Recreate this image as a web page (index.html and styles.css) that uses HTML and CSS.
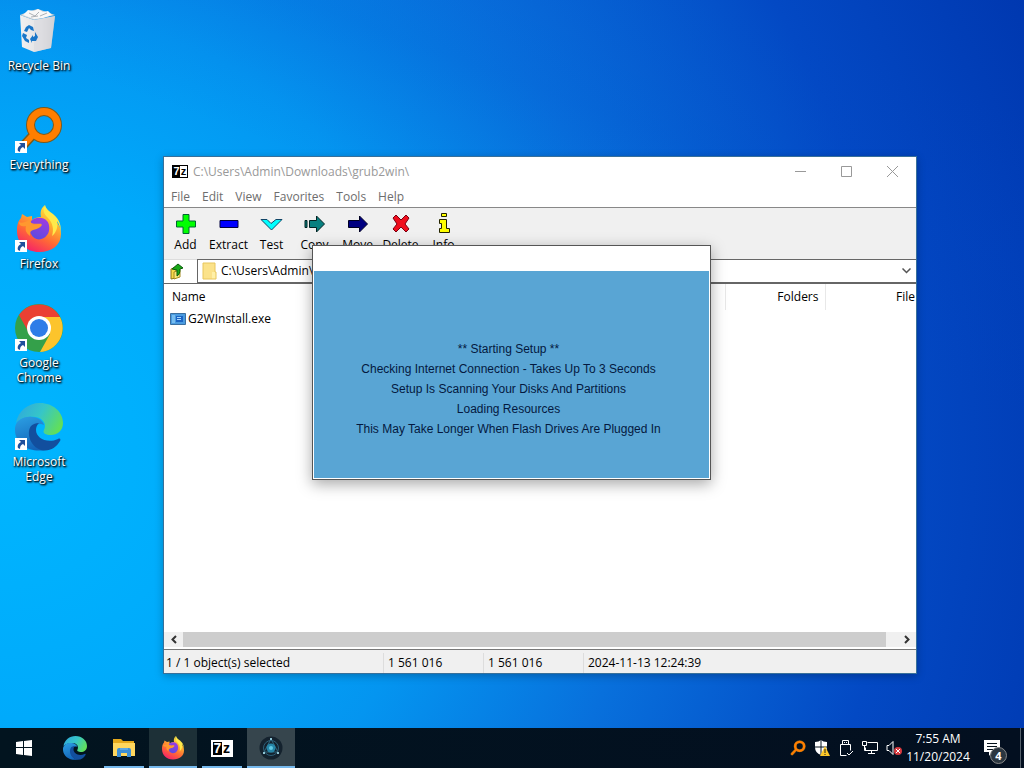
FILE: index.html
```html
<!DOCTYPE html>
<html lang="en">

<head>
     <meta charset="UTF-8">
     <meta name="viewport" content="width=device-width, initial-scale=1.0">
     <title>Desktop</title>
     <link rel="stylesheet" href="styles.css">
</head>

<body>
     <!-- shared icons -->
     <svg class="sprite" width="0" height="0" aria-hidden="true">
          <defs>
               <linearGradient id="ffBody" x1="0.8" y1="0" x2="0.3" y2="1">
                    <stop offset="0" stop-color="#fff04a" />
                    <stop offset="0.35" stop-color="#ffb02e" />
                    <stop offset="0.65" stop-color="#ff6a35" />
                    <stop offset="1" stop-color="#f5206a" />
               </linearGradient>
               <linearGradient id="ffGlobe" x1="0.7" y1="0" x2="0.3" y2="1">
                    <stop offset="0" stop-color="#a03be0" />
                    <stop offset="1" stop-color="#5b4be0" />
               </linearGradient>
               <linearGradient id="edgeTop" x1="0" y1="0.2" x2="1" y2="0.6">
                    <stop offset="0" stop-color="#2fa9dc" />
                    <stop offset="0.5" stop-color="#36c6c8" />
                    <stop offset="1" stop-color="#62df58" />
               </linearGradient>
               <linearGradient id="edgeLeft" x1="0.3" y1="0" x2="0.6" y2="1">
                    <stop offset="0" stop-color="#2a9be0" />
                    <stop offset="1" stop-color="#1263b8" />
               </linearGradient>
               <linearGradient id="binSide" x1="0" y1="0" x2="1" y2="0">
                    <stop offset="0" stop-color="#f1f1f1" />
                    <stop offset="0.6" stop-color="#e2e2e4" />
                    <stop offset="1" stop-color="#b9bbc0" />
               </linearGradient>
          </defs>
          <symbol id="shortcut" viewBox="0 0 12 12">
               <path d="M0 0h12v12H0z" fill="#fff" />
               <path d="M4 2h6v6L8 6C6 7 5 8 5 11L3 10C2 7 4 5 6 4z" fill="#1f4f9c" />
          </symbol>
          <symbol id="everything" viewBox="0 0 48 48">
               <path d="M18 29L6 42" stroke="#7a5a1c" stroke-width="9" stroke-linecap="round" />
               <circle cx="29" cy="19" r="13.500" fill="none" stroke="#7a5a1c" stroke-width="9" />
               <path d="M18 29L6 42" stroke="#ff7e00" stroke-width="6" stroke-linecap="round" />
               <circle cx="29" cy="19" r="13.500" fill="none" stroke="#ff7e00" stroke-width="7" />
          </symbol>
          <symbol id="firefox" viewBox="0 0 48 48">
               <path d="M30 0c-2 5-1 8 3 11 8 4 13 9 13 18 0 11-9 18-22 18S2 38 2 26c0-6 1-10 4-13l1-4 5 3 5-1 0 4c4-3 7-3 9-3-1-5 0-9 4-12z" fill="url(#ffBody)" />
               <path d="M30 0c-3 5-1 9 3 13 5 5 6 12 4 18 5-4 6-10 5-15 3 4 4 9 3 14 2-9 0-15-7-21-4-3-7-5-8-9z" fill="#ffe94a" />
               <path d="M15 17c4-5 13-6 17-1 3 3 3 11 0 14-4 6-13 6-16-1-2-3-1-6 2-6 4 0 7-1 9-4-4-1-8 1-12-2z" fill="url(#ffGlobe)" />
               <path d="M4 17c4 2 8-1 12-3-1 3 0 5 3 6l8 0c-2 3-5 4-9 5-3 1-3 3-3 6-4-3-5-6-4-10-4 1-7 0-7-4z" fill="#ff982f" />
          </symbol>
          <symbol id="chrome" viewBox="0 0 48 48">
               <circle cx="24" cy="24" r="24" fill="#34a04a" />
               <path d="M4 11A24 24 0 0 1 45 13H24L14 29z" fill="#ea4033" />
               <path d="M24 13h21A24 24 0 0 1 25 48L35 30z" fill="#fcc42c" />
               <circle cx="24" cy="24" r="12" fill="#fff" />
               <circle cx="24" cy="24" r="9" fill="#2e7de8" />
          </symbol>
          <symbol id="edge" viewBox="0 0 48 48">
               <path d="M1 20C3 8 13 0 25 0c13 0 23 9 23 20 0 8-6 12-12 12-5 0-9-2-7-5 3-6-1-12-9-13C12 13 4 16 1 20z" fill="url(#edgeTop)" />
               <path d="M0 25c1-8 9-12 17-11 6 0 11 4 12 8-6-3-13 2-13 9 0 9 6 15 14 16C14 50-1 41 0 25z" fill="url(#edgeLeft)" />
               <path d="M16 23c-5 7-1 20 10 24 8 2 15-2 19-9 1-2 0-3-2-2-11 5-22-1-22-9 0-3 1-5 3-7-3 0-6 1-8 3z" fill="#124f9e" />
          </symbol>
     </svg>

     <main class="desktop">
          <nav class="icons" aria-label="Desktop icons">
               <a class="shortcut-item" href="#">
                    <svg class="app-icon" viewBox="0 0 48 48">
                         <path d="M5 8l14 5 21-4-4 32-17 4-12-5z" fill="url(#binSide)" />
                         <path d="M5 8l10-4 8-2 17 6-21 5z" fill="#cfd2d5" />
                         <path d="M8 8l5-5 6 1 4-2 5 3 5-1 4 4-9 3-9 1z" fill="#f8f8f8" />
                         <path d="M14 6l6 3 4-4M25 9l7-3M16 10l7-1" stroke="#adb1b6" fill="none" />
                         <path d="M19 13l21-4-4 32-17 4z" fill="#dcdcdf" opacity=".7" />
                         <path d="M11 20l3-2 4 2 1 4-3-1-2-2-2 4-3-1zM8 26l4 2-1 3 3 2v3l-4-2-3-5zM20 25l3 5-2 4h-4v2l-2-4 3-4v2l2-1z" fill="#1976c8" />
                    </svg>
                    <span>Recycle Bin</span>
               </a>
               <a class="shortcut-item" href="#">
                    <svg class="app-icon" viewBox="0 0 48 48">
                         <use href="#everything" />
                         <use href="#shortcut" x="0" y="35" width="12" height="12" />
                    </svg>
                    <span>Everything</span>
               </a>
               <a class="shortcut-item" href="#">
                    <svg class="app-icon" viewBox="0 0 48 48">
                         <use href="#firefox" />
                         <use href="#shortcut" x="0" y="35" width="12" height="12" />
                    </svg>
                    <span>Firefox</span>
               </a>
               <a class="shortcut-item" href="#">
                    <svg class="app-icon" viewBox="0 0 48 48">
                         <use href="#chrome" />
                         <use href="#shortcut" x="0" y="35" width="12" height="12" />
                    </svg>
                    <span>Google<br>Chrome</span>
               </a>
               <a class="shortcut-item" href="#">
                    <svg class="app-icon" viewBox="0 0 48 48">
                         <use href="#edge" />
                         <use href="#shortcut" x="0" y="35" width="12" height="12" />
                    </svg>
                    <span>Microsoft<br>Edge</span>
               </a>
          </nav>

          <!-- file manager -->
          <section class="window">
               <header class="titlebar">
                    <span class="zip-logo small"><b>7</b><b>z</b></span>
                    <h1>C:\Users\Admin\Downloads\grub2win\</h1>
                    <button class="win-btn" aria-label="Minimize"><svg width="11" height="11"><path d="M0 5.500h11" /></svg></button>
                    <button class="win-btn" aria-label="Maximize"><svg width="11" height="11"><path d="M.5.500h10v10H.5z" /></svg></button>
                    <button class="win-btn" aria-label="Close"><svg width="11" height="11"><path d="M0 0l11 11M11 0L0 11" /></svg></button>
               </header>
               <div class="menubar">
                    <button>File</button>
                    <button>Edit</button>
                    <button>View</button>
                    <button>Favorites</button>
                    <button>Tools</button>
                    <button>Help</button>
               </div>
               <div class="toolbar">
                    <button>
                         <svg width="24" height="24"><path d="M9 2.500h6v6.500h6.500v6h-6.500v6.500H9v-6.500H2.500V9H9z" fill="#0f0" stroke="#063" /></svg>
                         <span>Add</span>
                    </button>
                    <button>
                         <svg width="24" height="24"><path d="M3 8.500h18v7H3z" fill="#00f" stroke="#000040" /></svg>
                         <span>Extract</span>
                    </button>
                    <button>
                         <svg width="24" height="24"><path d="M1 7.500h6l4 4 5-4h6L11.500 18z" fill="#0ff" stroke="#146" /></svg>
                         <span>Test</span>
                    </button>
                    <button>
                         <svg width="24" height="24"><path d="M2 8.500h2v7H2zM6.500 8.500h7V4l8 8-8 8v-4.500h-7z" fill="#088080" stroke="#022" /></svg>
                         <span>Copy</span>
                    </button>
                    <button>
                         <svg width="24" height="24"><path d="M2.500 8.500h11V4l8 8-8 8v-4.500h-11z" fill="#000080" stroke="#002" /></svg>
                         <span>Move</span>
                    </button>
                    <button>
                         <svg width="24" height="24"><path d="M4 6l3-3 5 5 5-5 3 3-4 6 4 5-3 3-5-5-5 5-3-3 4-5z" fill="#f00d1c" stroke="#701" /></svg>
                         <span>Delete</span>
                    </button>
                    <button>
                         <svg width="24" height="24"><path d="M9.500 1.500h5v3h-5zM7.500 7.500h7v9h3v4h-10v-4h2v-5h-2z" fill="#ff0" stroke="#220" /></svg>
                         <span>Info</span>
                    </button>
               </div>
               <div class="addressbar">
                    <button class="up" aria-label="Up one level">
                         <svg width="16" height="18" viewBox="0 0 16 18">
                              <path d="M2 6l5-2v11l-5 1z" fill="#f6d94a" stroke="#8a7418" />
                              <path d="M5 16l6-2V7L5 9z" fill="#fbe77a" stroke="#a38a20" />
                              <path d="M3 6l6-5 5 4-3 1c0 4-1 6-3 7V7z" fill="#18a818" stroke="#075b0a" />
                         </svg>
                    </button>
                    <div class="path">
                         <svg width="15" height="18" viewBox="0 0 15 18">
                              <path d="M1 1h12v16H1z" fill="#fbe28a" />
                              <path d="M10 10h4v7h-4z" fill="#fff0a8" />
                              <path d="M1 1h12v9h1v7H1z" fill="none" stroke="#e8c65c" />
                         </svg>
                         <select aria-label="Path">
                              <option>C:\Users\Admin\Downloads\grub2win\</option>
                         </select>
                         <svg class="chevron" width="9" height="6"><path d="M.5.500l4 4 4-4" fill="none" stroke="#555" stroke-width="1.500" /></svg>
                    </div>
               </div>
               <div class="list">
                    <table>
                         <thead>
                              <tr>
                                   <th class="col-name">Name</th>
                                   <th class="col-mid"></th>
                                   <th class="col-num">Folders</th>
                                   <th class="col-last">File</th>
                              </tr>
                         </thead>
                         <tbody>
                              <tr>
                                   <td colspan="4">
                                        <div class="file">
                                             <svg width="16" height="12" viewBox="0 0 16 12">
                                                  <path d="M.5.500h15v11H.5z" fill="#4a9be0" stroke="#3b6f9f" />
                                                  <path d="M2 2h3v8H2z" fill="#77bdf0" />
                                                  <path d="M6 3h7v6H6z" fill="#1b64c4" />
                                                  <path d="M7 4.500h4M7 6.500h4" stroke="#a7d7ff" />
                                             </svg>
                                             G2WInstall.exe
                                        </div>
                                   </td>
                              </tr>
                         </tbody>
                    </table>
               </div>
               <div class="scrollbar">
                    <button aria-label="Scroll left"><svg width="6" height="9"><path d="M5 1L1.500 4.500 5 8" /></svg></button>
                    <div class="thumb"></div>
                    <button aria-label="Scroll right"><svg width="6" height="9"><path d="M1 1l3.500 3.500L1 8" /></svg></button>
               </div>
               <footer class="statusbar">
                    <span class="selected">1 / 1 object(s) selected</span>
                    <span>1 561 016</span>
                    <span>1 561 016</span>
                    <span class="date">2024-11-13 12:24:39</span>
               </footer>
          </section>

          <!-- setup splash -->
          <section class="splash" role="dialog" aria-label="Starting Setup">
               <div class="splash-body">
                    <p>** Starting Setup **</p>
                    <p>Checking Internet Connection - Takes Up To 3 Seconds</p>
                    <p>Setup Is Scanning Your Disks And Partitions</p>
                    <p>Loading Resources</p>
                    <p>This May Take Longer When Flash Drives Are Plugged In</p>
               </div>
          </section>
     </main>

     <footer class="taskbar">
          <button class="task start" aria-label="Start">
               <svg width="16" height="16" viewBox="0 0 16 16"><path d="M0 2l7-1v6H0zM8 1l8-1v7H8zM0 8h7v7l-7-1zM8 8h8v8l-8-1z" fill="#fff" /></svg>
          </button>
          <button class="task" aria-label="Microsoft Edge"><svg width="24" height="24"><use href="#edge" /></svg></button>
          <button class="task open" aria-label="File Explorer">
               <svg width="24" height="24" viewBox="0 0 24 24">
                    <path d="M1 3h8l2 2h11v4H1z" fill="#e5a91c" />
                    <path d="M1 7h22v13H1z" fill="#ffd75e" />
                    <path d="M5 21v-7q0-2 2-2h10q2 0 2 2v7h-4v-4H9v4z" fill="#3c8fd6" />
                    <path d="M8 13h8" stroke="#7fc0f0" />
               </svg>
          </button>
          <button class="task active firefox" aria-label="Firefox"><svg width="24" height="24"><use href="#firefox" /></svg></button>
          <button class="task open" aria-label="7-Zip"><span class="zip-logo"><b>7</b><b>z</b></span></button>
          <button class="task active" aria-label="Grub2Win">
               <svg width="24" height="24" viewBox="0 0 24 24">
                    <circle cx="12" cy="12" r="11.500" fill="#14222e" />
                    <circle cx="12" cy="12" r="7.500" fill="none" stroke="#2d6079" />
                    <path d="M12 3l7 13H5z" fill="none" stroke="#2f647b" />
                    <circle cx="12" cy="12" r="4.500" fill="#2586a8" />
                    <circle cx="12" cy="12" r="2" fill="#5fc9e4" />
                    <path d="M11 2h2v2h-2zM4 16h2v2H4zM18 16h2v2h-2z" fill="#8fc4d4" />
               </svg>
          </button>

          <div class="tray">
               <button class="tray-btn" aria-label="Everything"><svg width="16" height="16"><use href="#everything" /></svg></button>
               <button class="tray-btn" aria-label="Windows Security">
                    <svg width="16" height="16" viewBox="0 0 16 16">
                         <path d="M1 2q4 0 6-2 2 2 6 2v5q0 6-6 8Q1 13 1 7z" fill="#fff" />
                         <path d="M7 0v15M1 7h12" stroke="#06121c" />
                         <path d="M11 6l5 10H6z" fill="#ffc928" />
                         <path d="M11 9v4M11 14v1" stroke="#222" />
                    </svg>
               </button>
               <button class="tray-btn" aria-label="Safely remove hardware">
                    <svg class="line" width="16" height="16" viewBox="0 0 16 16">
                         <path d="M4.500 4.500v-4h6v4M2.500 4.500h10v6M2.500 4.500v11h6M9 13l2 2 4-4M6 2.500h1M8 2.500h1" />
                    </svg>
               </button>
               <button class="tray-btn" aria-label="Network">
                    <svg class="line" width="16" height="16" viewBox="0 0 16 16">
                         <path d="M5.500 2.500h10v8h-12v-3M9.500 10.500v3M6 13.500h7M.5 1.500h4v4h-4zM2.500 5.500v5h2" />
                    </svg>
               </button>
               <button class="tray-btn" aria-label="Volume muted">
                    <svg width="16" height="16" viewBox="0 0 16 16">
                         <path d="M1 5.500h2l4-4v13l-4-4H1z" fill="none" stroke="#fff" />
                         <circle cx="12" cy="11" r="4" fill="#d83a3f" />
                         <path d="M10 9l4 4M14 9l-4 4" stroke="#fff" />
                    </svg>
               </button>
               <time class="clock" datetime="2024-11-20T07:55">7:55 AM<br>11/20/2024</time>
               <button class="notify" aria-label="Notifications">
                    <svg width="16" height="16" viewBox="0 0 16 16">
                         <path d="M0 0h16v12H8l-3 4v-4H0z" fill="#fff" />
                         <path d="M3 3.500h10M3 6.500h10M3 9.500h6" stroke="#06121c" />
                    </svg>
                    <span class="badge">4</span>
               </button>
               <button class="show-desktop" aria-label="Show desktop"></button>
          </div>
     </footer>
</body>

</html>
```
FILE: styles.css
```css
* {
     box-sizing: border-box;
}

body {
     margin: 0;
     height: 100vh;
     display: flex;
     flex-direction: column;
     overflow: hidden;
     font-family: "Open Sans", "Noto Sans", sans-serif;
     font-size: 12px;
     line-height: 16px;
     color: #000;
}

button {
     border: none;
     background: none;
     padding: 0;
     margin: 0;
     font: inherit;
     color: inherit;
}

svg {
     display: block;
     flex: none;
}

.sprite {
     position: absolute;
}

/* 7-zip logo, used in the title bar and the taskbar */

.zip-logo {
     display: flex;
     flex: none;
     width: 22px;
     height: 17px;
     border: 2px solid #fff;
     background: #fff;
     font-family: "Liberation Sans", sans-serif;
     font-size: 14px;
     line-height: 13px;
     text-align: center;
}

.zip-logo b {
     flex: 1;
     color: #000;
}

.zip-logo b:first-child {
     background: #000;
     color: #fff;
}

.zip-logo.small {
     width: 16px;
     height: 13px;
     margin-right: 5px;
     border: 1px solid #000;
     outline: 1px solid #fff;
     font-size: 11px;
     line-height: 11px;
}

/* desktop */

.desktop {
     position: relative;
     flex: 1;
     background:
          linear-gradient(20deg, transparent 62%, rgba(0, 70, 200, 0.12) 76%, transparent 90%),
          radial-gradient(circle at 0% 62%, #00b6ff 0, #00aafb 24%, #0495f0 40%, #0870dc 58%, #0349c4 80%, #0038b0 100%);
}

.icons {
     display: grid;
     grid-auto-rows: 99px;
     width: 78px;
     padding-top: 7px;
}

.shortcut-item {
     display: flex;
     flex-direction: column;
     align-items: center;
     gap: 3px;
     color: #fff;
     text-align: center;
     text-decoration: none;
     line-height: 15px;
     text-shadow: 1px 1px 2px #000, 1px 1px 2px #000;
}

.app-icon {
     width: 48px;
     height: 48px;
}

/* file manager window */

.window {
     position: absolute;
     left: 163px;
     top: 156px;
     width: 754px;
     height: 518px;
     display: flex;
     flex-direction: column;
     background: #fff;
     border: 1px solid #38709a;
     box-shadow: 0 2px 8px rgba(0, 0, 0, 0.25);
}

.titlebar {
     display: flex;
     align-items: center;
     height: 29px;
     padding-left: 8px;
     padding-right: 1px;
     color: #999;
}

.titlebar h1 {
     flex: 1;
     margin: 0;
     font-size: 12px;
     font-weight: normal;
}

.win-btn {
     display: flex;
     align-items: center;
     justify-content: center;
     width: 46px;
     height: 29px;
}

.win-btn path {
     fill: none;
     stroke: #999;
}

.menubar {
     display: flex;
     align-items: center;
     gap: 12px;
     height: 22px;
     padding-left: 7px;
     border-bottom: 1px solid #888;
     color: #6d6d6d;
}

.toolbar {
     display: flex;
     height: 51px;
     background: #f0f0f0;
}

.toolbar button {
     display: flex;
     flex-direction: column;
     align-items: center;
     gap: 1px;
     width: 43px;
     padding-top: 4px;
     white-space: nowrap;
}

.addressbar {
     display: flex;
     height: 25px;
     background: #fff;
     border-bottom: 1px solid #666;
}

.up {
     display: flex;
     align-items: center;
     width: 33px;
     padding-left: 5px;
     border-top: 1px solid #ddd;
}

.path {
     display: flex;
     align-items: center;
     flex: 1;
     padding: 0 5px 0 4px;
     border: 1px solid #666;
     border-right: none;
}

.path select {
     flex: 1;
     appearance: none;
     border: none;
     background: none;
     padding: 0 0 0 4px;
     font: inherit;
     color: inherit;
}

.list {
     flex: 1;
     overflow: hidden;
}

.list table {
     width: 100%;
     border-collapse: collapse;
     table-layout: fixed;
}

.list th {
     height: 26px;
     padding: 0 6px 0 8px;
     font-weight: normal;
     text-align: right;
     border-right: 1px solid #e8e8e8;
}

.list .col-name {
     width: 160px;
     text-align: left;
     border: none;
}

.list .col-num {
     width: 100px;
}

.list .col-last {
     width: 91px;
     padding-right: 1px;
     border: none;
}

.list td {
     padding: 0 6px;
}

.file {
     display: flex;
     align-items: center;
     gap: 2px;
     height: 18px;
}

.scrollbar {
     display: flex;
     height: 17px;
     background: #f0f0f0;
     border-bottom: 2px solid #fff;
}

.scrollbar button {
     display: flex;
     align-items: center;
     justify-content: center;
     width: 19px;
}

.scrollbar path {
     fill: none;
     stroke: #333;
     stroke-width: 2;
}

.thumb {
     flex: 1;
     margin-right: 11px;
     background: #cdcdcd;
}

.statusbar {
     display: flex;
     align-items: center;
     height: 24px;
     padding-top: 2px;
     background: #f0f0f0;
     border-top: 1px solid #777;
}

.statusbar span {
     width: 100px;
     padding-left: 4px;
     line-height: 20px;
     border-left: 1px solid #ddd;
}

.statusbar .selected {
     width: 219px;
     padding-left: 2px;
     border: none;
}

.statusbar .date {
     flex: 1;
}

/* setup splash */

.splash {
     position: absolute;
     left: 312px;
     top: 245px;
     width: 399px;
     height: 235px;
     padding: 25px 1px 1px;
     background: #fff;
     border: 1px solid #555;
     box-shadow: 0 4px 14px rgba(0, 0, 0, 0.35);
}

.splash-body {
     height: 100%;
     padding: 68px 6px 0 0;
     background: #59a5d4;
     color: #04193f;
     font-family: "Liberation Sans", Arial, sans-serif;
     font-size: 12px;
     text-align: center;
}

.splash-body p {
     margin: 0;
     line-height: 20px;
}

/* taskbar */

.taskbar {
     display: flex;
     gap: 1px;
     height: 40px;
     background: linear-gradient(90deg, #02141f, #030f20);
     color: #fff;
}

.task {
     display: flex;
     align-items: center;
     justify-content: center;
     width: 48px;
     border-bottom: 2px solid transparent;
     padding-top: 2px;
}

.start {
     margin-right: 2px;
}

.open {
     background: linear-gradient(#76b9ed, #76b9ed) bottom / 40px 2px no-repeat border-box;
}

.active {
     background: #36454d;
     border-bottom-color: #76b9ed;
}

.firefox {
     background: #1d3037;
}

.tray {
     display: flex;
     align-items: center;
     margin-left: auto;
}

.tray-btn {
     display: flex;
     justify-content: center;
     width: 24px;
}

.line {
     fill: none;
     stroke: #fff;
}

.clock {
     width: 64px;
     text-align: center;
     line-height: 18px;
}

.notify {
     position: relative;
     display: flex;
     align-items: center;
     justify-content: center;
     width: 44px;
     height: 40px;
}

.badge {
     position: absolute;
     right: 7px;
     bottom: 4px;
     width: 17px;
     height: 17px;
     border: 1px solid #888;
     border-radius: 50%;
     background: #2b3640;
     font-size: 11px;
     font-weight: bold;
     line-height: 15px;
}

.show-desktop {
     width: 4px;
     height: 40px;
     margin-left: 6px;
     border-left: 1px solid #56616c;
}
```
